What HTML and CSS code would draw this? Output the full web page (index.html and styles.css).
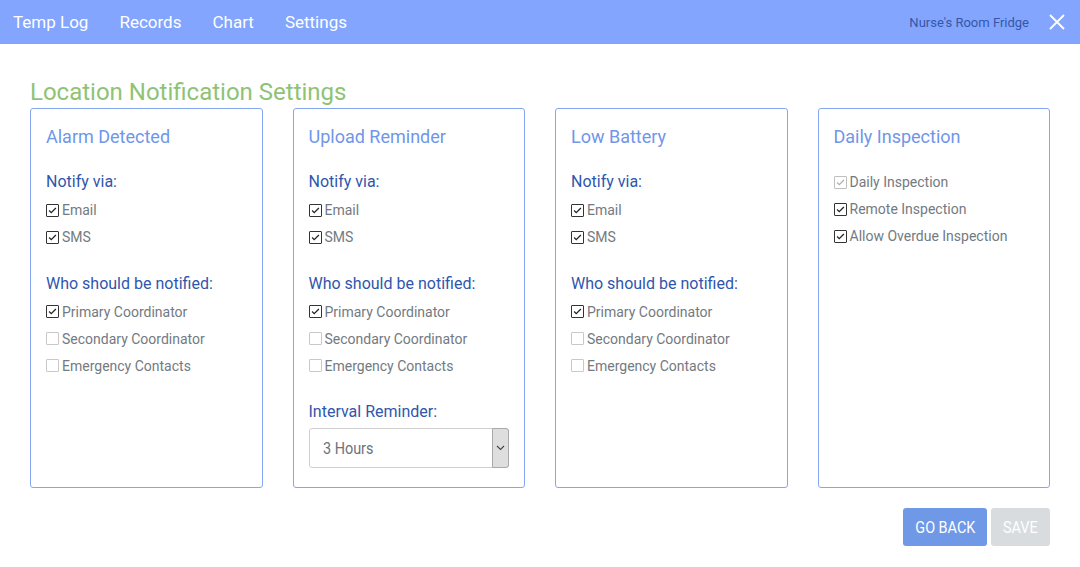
FILE: index.html
```html
<!DOCTYPE html>
<html>
<head>
<meta charset="utf-8">
<link rel="stylesheet" href="styles.css">
</head>
<body>
<header class="topbar">
  <nav class="nav">
    <a class="nav-link">Temp Log</a>
    <a class="nav-link">Records</a>
    <a class="nav-link">Chart</a>
    <a class="nav-link">Settings</a>
  </nav>
  <div class="topbar-right">
    <span class="location">Nurse's Room Fridge</span>
    <svg class="close" width="16" height="16" viewBox="0 0 16 16"><path d="M1 1L15 15M15 1L1 15" stroke="#fff" stroke-width="1.8" fill="none"/></svg>
  </div>
</header>
<main class="main">
  <h1 class="title">Location Notification Settings</h1>
  <div class="cards">
    <section class="card">
      <h2 class="card-title">Alarm Detected</h2>
      <div class="group-label">Notify via:</div>
      <label class="check"><span class="box on"><svg viewBox="0 0 13 13"><path d="M2.5 6.5L5 9L10.5 3.5"/></svg></span>Email</label>
      <label class="check"><span class="box on"><svg viewBox="0 0 13 13"><path d="M2.5 6.5L5 9L10.5 3.5"/></svg></span>SMS</label>
      <div class="group-label gap">Who should be notified:</div>
      <label class="check"><span class="box on"><svg viewBox="0 0 13 13"><path d="M2.5 6.5L5 9L10.5 3.5"/></svg></span>Primary Coordinator</label>
      <label class="check"><span class="box"></span>Secondary Coordinator</label>
      <label class="check"><span class="box"></span>Emergency Contacts</label>
    </section>
    <section class="card">
      <h2 class="card-title">Upload Reminder</h2>
      <div class="group-label">Notify via:</div>
      <label class="check"><span class="box on"><svg viewBox="0 0 13 13"><path d="M2.5 6.5L5 9L10.5 3.5"/></svg></span>Email</label>
      <label class="check"><span class="box on"><svg viewBox="0 0 13 13"><path d="M2.5 6.5L5 9L10.5 3.5"/></svg></span>SMS</label>
      <div class="group-label gap">Who should be notified:</div>
      <label class="check"><span class="box on"><svg viewBox="0 0 13 13"><path d="M2.5 6.5L5 9L10.5 3.5"/></svg></span>Primary Coordinator</label>
      <label class="check"><span class="box"></span>Secondary Coordinator</label>
      <label class="check"><span class="box"></span>Emergency Contacts</label>
      <div class="group-label gap">Interval Reminder:</div>
      <div class="select">
        <span class="select-value"><span class="cond">3 Hours</span></span>
        <span class="select-arrow"><svg width="9" height="6" viewBox="0 0 9 6"><path d="M1 1L4.5 4.5L8 1" stroke="#444" stroke-width="1.1" fill="none"/></svg></span>
      </div>
    </section>
    <section class="card">
      <h2 class="card-title">Low Battery</h2>
      <div class="group-label">Notify via:</div>
      <label class="check"><span class="box on"><svg viewBox="0 0 13 13"><path d="M2.5 6.5L5 9L10.5 3.5"/></svg></span>Email</label>
      <label class="check"><span class="box on"><svg viewBox="0 0 13 13"><path d="M2.5 6.5L5 9L10.5 3.5"/></svg></span>SMS</label>
      <div class="group-label gap">Who should be notified:</div>
      <label class="check"><span class="box on"><svg viewBox="0 0 13 13"><path d="M2.5 6.5L5 9L10.5 3.5"/></svg></span>Primary Coordinator</label>
      <label class="check"><span class="box"></span>Secondary Coordinator</label>
      <label class="check"><span class="box"></span>Emergency Contacts</label>
    </section>
    <section class="card">
      <h2 class="card-title">Daily Inspection</h2>
      <div class="list-daily">
        <label class="check"><span class="box disabled"><svg viewBox="0 0 13 13"><path d="M2.5 6.5L5 9L10.5 3.5"/></svg></span>Daily Inspection</label>
        <label class="check"><span class="box on"><svg viewBox="0 0 13 13"><path d="M2.5 6.5L5 9L10.5 3.5"/></svg></span>Remote Inspection</label>
        <label class="check"><span class="box on"><svg viewBox="0 0 13 13"><path d="M2.5 6.5L5 9L10.5 3.5"/></svg></span>Allow Overdue Inspection</label>
      </div>
    </section>
  </div>
  <div class="actions">
    <button class="btn btn-primary"><span class="cond">GO BACK</span></button>
    <button class="btn btn-disabled"><span class="cond">SAVE</span></button>
  </div>
</main>
</body>
</html>
```
FILE: styles.css
```css
* { box-sizing: border-box; }
html, body { margin: 0; padding: 0; }
body {
  font-family: Roboto, "Noto Sans", "Liberation Sans", sans-serif;
  background: #fff;
  width: 1080px;
  height: 567px;
  overflow: hidden;
}
.topbar {
  height: 44px;
  background: #83a5fd;
  display: flex;
  align-items: center;
  justify-content: space-between;
  padding: 0 15px 0 13px;
}
.nav { display: flex; gap: 31px; }
.nav-link {
  color: #fff;
  font-size: 17px;
  line-height: 44px;
  text-decoration: none;
}
.topbar-right { display: flex; align-items: center; gap: 20px; }
.location { color: #3457a9; font-size: 13px; }
.close { display: block; }
.main { padding: 32px 30px 0 30px; }
.title {
  margin: 0;
  font-size: 24px;
  font-weight: 400;
  line-height: 32px;
  color: #8fc374;
}
.cards {
  display: grid;
  grid-template-columns: repeat(4, 1fr);
  gap: 30px;
}
.card {
  height: 380px;
  border: 1px solid #86a5f1;
  border-radius: 3px;
  padding: 16px 15px;
}
.card-title {
  margin: 0 0 22px 0;
  font-size: 18px;
  font-weight: 400;
  line-height: 24px;
  color: #7096ea;
}
.group-label {
  font-size: 16px;
  line-height: 22px;
  color: #2f56ad;
  margin-bottom: 3.5px;
}
.group-label.gap { margin-top: 22px; }
.check {
  display: flex;
  align-items: center;
  height: 27px;
  font-size: 14px;
  color: #737a81;
  gap: 3px;
}
.box {
  width: 13px;
  height: 13px;
  border: 1px solid #c9c9c9;
  border-radius: 1px;
  background: #fff;
  flex: none;
  display: flex;
}
.box svg { width: 11px; height: 11px; }
.box svg path { fill: none; stroke: #222; stroke-width: 1.5; }
.box.on { border-color: #333; }
.box.disabled { border-color: #bfbfbf; }
.box.disabled svg path { stroke: #b0b0b0; }
.list-daily { margin-top: -2.5px; }
.select {
  margin-top: 5px;
  height: 40px;
  border: 1px solid #cfcfcf;
  border-radius: 3px;
  display: flex;
  align-items: stretch;
}
.select-value {
  flex: 1;
  display: flex;
  align-items: center;
  padding-left: 13px;
  font-size: 16px;
  color: #6b737b;
}
.cond {
  display: inline-block;
  transform: scaleX(0.9);
  transform-origin: left center;
  white-space: nowrap;
}
.btn .cond { transform-origin: center; }
.select-arrow {
  width: 17px;
  background: #dedede;
  border: 1px solid #a9a9a9;
  border-radius: 0 3px 3px 0;
  margin: -1px -1px -1px 0;
  display: flex;
  align-items: center;
  justify-content: center;
}
.actions {
  display: flex;
  justify-content: flex-end;
  gap: 4px;
  margin-top: 20px;
}
.btn {
  height: 38px;
  border: none;
  border-radius: 3px;
  font-family: Roboto, "Noto Sans", sans-serif;
  font-size: 16px;
  color: #fff;
  padding: 0;
  white-space: nowrap;
  display: flex;
  align-items: center;
  justify-content: center;
}
.btn-primary { background: #6f98e6; width: 84px; }
.btn-disabled { background: #d9dcdf; width: 59px; }
```
